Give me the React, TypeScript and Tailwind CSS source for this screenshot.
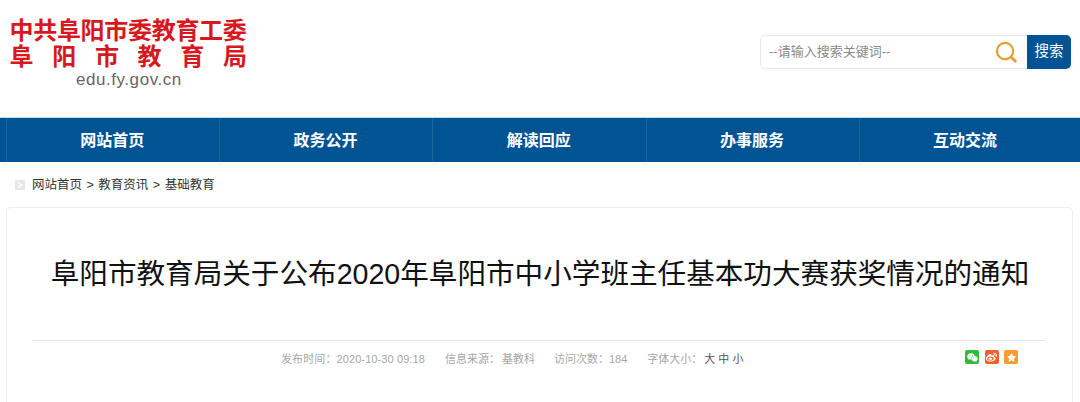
import { FaWeixin, FaWeibo, FaStar } from "react-icons/fa";

const cjk = "font-['Liberation_Sans','Noto_Sans_CJK_SC',sans-serif]";
const navItems = ["网站首页", "政务公开", "解读回应", "办事服务", "互动交流"];

export default function App() {
  return (
    <div className={`h-[402px] w-[1080px] overflow-hidden bg-white ${cjk}`}>
      {/* header */}
      <div className="flex h-[117px] items-start justify-between pl-[9.5px] pr-[9px]">
        <div className="flex w-[237.5px] flex-col pt-[19px] text-[#d7181f]">
          <div className="text-[24px] leading-[24px] font-bold tracking-[-0.3px] whitespace-nowrap">中共阜阳市委教育工委</div>
          <div className="mt-[1px] flex justify-between text-[24px] leading-[25px] font-bold">
            <span>阜</span>
            <span>阳</span>
            <span>市</span>
            <span>教</span>
            <span>育</span>
            <span>局</span>
          </div>
          <div className="mt-[1px] pl-[66.5px] text-[17px] leading-[20px] tracking-[0.55px] text-[#666666]">edu.fy.gov.cn</div>
        </div>
        <div className="mt-[35px] flex h-[34px]">
          <div className="flex w-[267px] items-center justify-between rounded-l-[5px] border border-r-0 border-[#e8e8e8] pr-[9px] pl-[8px] text-[13px] text-[#8a8a8a]">
            <span>--请输入搜索关键词--</span>
            <svg width="23" height="23" viewBox="0 0 24 24" fill="none" stroke="#e3a02f" strokeWidth="2.2">
              <circle cx="10.5" cy="10.5" r="8.5" />
              <path d="M16.8 16.8 L22 22" strokeWidth="3" />
            </svg>
          </div>
          <div className="flex w-[44px] items-center justify-center rounded-r-[5px] bg-[#005494] text-[14.5px] text-white">搜索</div>
        </div>
      </div>

      {/* nav */}
      <div className="flex h-[45px] border-t border-[#c9d9e6] bg-[#005494] pl-[6px]">
        {navItems.map((item) => (
          <div
            key={item}
            className="flex w-[213.2px] items-center justify-center border-l border-[#1c659f] pt-[2px] pr-[1.5px] text-[16px] font-bold text-white"
          >
            {item}
          </div>
        ))}
      </div>

      {/* breadcrumb */}
      <div className="flex h-[45px] items-center pt-[1px] pl-[15px] text-[12.5px] text-[#333333]">
        <span className="mr-[7px] flex h-[10px] w-[10px] items-center justify-center rounded-[1px] bg-[#e6e6e6]">
          <svg width="6" height="8" viewBox="0 0 6 8" fill="none" stroke="#ffffff" strokeWidth="1.5">
            <path d="M1 1 L4.5 4 L1 7" />
          </svg>
        </span>
        <span>网站首页</span>
        <span className="mx-[4.5px]">&gt;</span>
        <span>教育资讯</span>
        <span className="mx-[4.5px]">&gt;</span>
        <span>基础教育</span>
      </div>

      {/* article */}
      <div className="mx-[6px] h-[200px] w-[1067px] rounded-t-[5px] border border-b-0 border-[#eeeeee] pr-[27px] pl-[25px]">
        <h1 className="flex h-[133px] items-center justify-center border-b border-[#e8e8e8] pt-[1px] pl-[3px] text-[28.6px] font-normal whitespace-nowrap text-[#111111]">
          阜阳市教育局关于公布2020年阜阳市中小学班主任基本功大赛获奖情况的通知
        </h1>
        <div className="relative flex h-[36px] items-center pl-[249px] text-[11px] text-[#a6a6a6]">
          <span className="tracking-[0.1px]">发布时间：2020-10-30 09:18</span>
          <span className="ml-[20px]">信息来源：</span>
          <span className="ml-[2px]">基教科</span>
          <span className="ml-[19px]">访问次数：184</span>
          <span className="ml-[20px]">字体大小：</span>
          <span className="ml-[2px] text-[#555555]">大 中 小</span>
          <div className="absolute top-[9px] right-[27px] flex gap-[5.5px]">
            <span className="flex h-[14px] w-[14px] items-center justify-center rounded-[2px] bg-[#35b93c] text-[11px] text-white">
              <FaWeixin />
            </span>
            <span className="flex h-[14px] w-[14px] items-center justify-center rounded-[2px] bg-[#f4602a] text-[11px] text-white">
              <FaWeibo />
            </span>
            <span className="flex h-[14px] w-[14px] items-center justify-center rounded-[2px] bg-[#fb9a2e] text-[9px] text-white">
              <FaStar />
            </span>
          </div>
        </div>
      </div>
    </div>
  );
}
